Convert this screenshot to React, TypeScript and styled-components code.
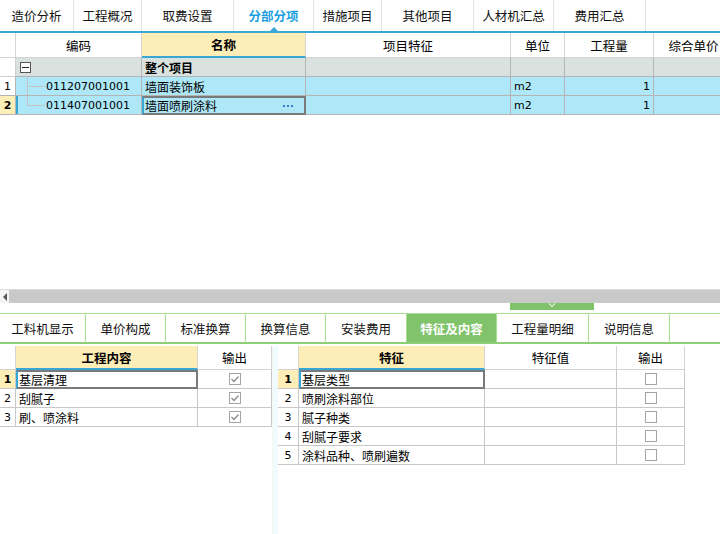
import React from 'react';
import styled, { createGlobalStyle } from 'styled-components';

const GlobalStyle = createGlobalStyle`
  html, body {
    margin: 0;
    padding: 0;
    background: #fff;
  }
  body {
    font-family: "Noto Sans CJK SC", "DejaVu Sans", sans-serif;
    font-size: 12px;
    color: #000;
  }
  * {
    box-sizing: border-box;
  }
`;

const Page = styled.div`
  width: 720px;
  height: 534px;
  overflow: hidden;
  display: flex;
  flex-direction: column;
  background: #fff;
`;

/* ---------- top tabs ---------- */

const TopTabs = styled.div`
  display: flex;
  height: 33px;
  border-bottom: 2px solid #3aa9da;
`;

const TopTab = styled.div<{ $w: number; $active?: boolean }>`
  position: relative;
  width: ${p => p.$w}px;
  display: flex;
  align-items: center;
  justify-content: center;
  border-right: 1px solid #e3e3e3;
  font-size: 12.5px;
  color: ${p => (p.$active ? '#1a9ee0' : '#111')};
  font-weight: ${p => (p.$active ? 700 : 400)};
  ${p =>
    p.$active &&
    `
    &::after {
      content: '';
      position: absolute;
      bottom: 0;
      left: 50%;
      margin-left: -4px;
      border-left: 4px solid transparent;
      border-right: 4px solid transparent;
      border-bottom: 4px solid #3aa9da;
    }
  `}
`;

/* ---------- grids ---------- */

const Grid = styled.div<{ $cols: string; $width?: number }>`
  display: grid;
  grid-template-columns: ${p => p.$cols};
  width: ${p => (p.$width ? `${p.$width}px` : 'auto')};
  flex-shrink: 0;
`;

const HeadCell = styled.div<{ $sort?: boolean; $h: number }>`
  height: ${p => p.$h}px;
  display: flex;
  align-items: center;
  justify-content: center;
  border-right: 1px solid #d4d4d4;
  border-bottom: ${p => (p.$sort ? '2px solid #39a7d6' : '1px solid #d4d4d4')};
  background: ${p => (p.$sort ? '#fdedb6' : '#fff')};
  font-weight: ${p => (p.$sort ? 700 : 400)};
  font-size: 12.5px;
  white-space: nowrap;
  overflow: hidden;
`;

type CellProps = {
  $bg?: string;
  $align?: 'left' | 'right' | 'center';
  $bold?: boolean;
  $selected?: boolean;
  $mark?: boolean;
  $line?: string;
};

const Cell = styled.div<CellProps>`
  position: relative;
  height: 19px;
  display: flex;
  align-items: center;
  justify-content: ${p =>
    p.$align === 'right' ? 'flex-end' : p.$align === 'center' ? 'center' : 'flex-start'};
  padding: 0 3px;
  background: ${p => p.$bg || '#fff'};
  border-right: 1px solid ${p => p.$line || '#b4b4b4'};
  border-bottom: 1px solid ${p => p.$line || '#b4b4b4'};
  font-weight: ${p => (p.$bold ? 700 : 400)};
  white-space: nowrap;
  overflow: hidden;
  ${p => p.$mark && `box-shadow: inset 2px 0 0 #39a7d6;`}
  ${p =>
    p.$selected &&
    `
    border: 2px solid #7a7a7a;
    border-left-color: #39a7d6;
    padding-left: 1px;
  `}
`;

const RowNum = styled(Cell)<{ $current?: boolean }>`
  justify-content: center;
  padding: 0;
  font-family: "DejaVu Sans", sans-serif;
  font-size: 11px;
  background: ${p => (p.$current ? '#fdedb6' : p.$bg || '#fff')};
  font-weight: ${p => (p.$current ? 700 : 400)};
`;

const Dots = styled.span`
  margin-left: auto;
  margin-right: 8px;
  display: flex;
  gap: 2px;
  & > i {
    width: 2px;
    height: 2px;
    background: #2f7fd4;
  }
`;

const MinusBox = styled.span`
  width: 11px;
  height: 11px;
  border: 1px solid #555;
  background: #fff;
  display: flex;
  align-items: center;
  justify-content: center;
  margin-left: 1px;
  &::before {
    content: '';
    width: 7px;
    height: 1px;
    background: #222;
  }
`;

const TreeLine = styled.span<{ $cont?: boolean }>`
  position: relative;
  align-self: stretch;
  width: 18px;
  margin: 0 1px 0 8px;
  &::before {
    content: '';
    position: absolute;
    left: 0;
    top: -1px;
    height: ${p => (p.$cont ? '21px' : '10px')};
    border-left: 1px solid #c4c4c4;
  }
  &::after {
    content: '';
    position: absolute;
    left: 0;
    right: 0;
    top: 9px;
    border-top: 1px solid #c4c4c4;
  }
`;

const Code = styled.span`
  font-family: "DejaVu Sans", sans-serif;
  font-size: 11px;
`;

/* ---------- middle ---------- */

const Blank = styled.div`
  flex: 1;
`;

const HScroll = styled.div`
  height: 14px;
  display: flex;
  background: #c9c9c9;
  border-top: 1px solid #dcdcdc;
`;

const ScrollArrow = styled.div`
  width: 9px;
  background: #f4f4f4;
  display: flex;
  align-items: center;
  justify-content: center;
  &::before {
    content: '';
    border-top: 4px solid transparent;
    border-bottom: 4px solid transparent;
    border-right: 4px solid #555;
  }
`;

const SplitBar = styled.div`
  height: 10px;
  display: flex;
  padding-left: 510px;
`;

const SplitHandle = styled.div`
  width: 84px;
  height: 7px;
  background: #80c36a;
  display: flex;
  justify-content: center;
  align-items: flex-start;
`;

/* ---------- lower tabs ---------- */

const LowerTabs = styled.div`
  display: flex;
  height: 31px;
  border-top: 1px solid #a8df92;
  border-bottom: 2px solid #8ccf77;
`;

const LowerTab = styled.div<{ $w: number; $active?: boolean }>`
  width: ${p => p.$w}px;
  display: flex;
  align-items: center;
  justify-content: center;
  border-right: 1px solid #a8df92;
  font-size: 12.5px;
  background: ${p => (p.$active ? '#80c36a' : '#fff')};
  color: ${p => (p.$active ? '#fff' : '#111')};
  font-weight: ${p => (p.$active ? 700 : 400)};
`;

const Lower = styled.div`
  display: flex;
  align-items: flex-start;
  height: 190px;
  padding-top: 2px;
`;

const Divider = styled.div`
  width: 6px;
  align-self: stretch;
  background: #effbfd;
  border-left: 1px solid #f6f6f6;
`;

const Check = styled.span`
  width: 12px;
  height: 12px;
  border: 1px solid #a4a4a4;
  background: #fff;
  display: flex;
  align-items: center;
  justify-content: center;
`;

function CheckBox({ checked }: { checked?: boolean }) {
  return (
    <Check>
      {checked && (
        <svg width="10" height="10" viewBox="0 0 10 10">
          <path d="M1.5 5 L4 7.5 L8.5 2.5" fill="none" stroke="#8a8a8a" strokeWidth="1.3" />
        </svg>
      )}
    </Check>
  );
}

const topTabs: [string, number][] = [
  ['造价分析', 74],
  ['工程概况', 68],
  ['取费设置', 92],
  ['分部分项', 80],
  ['措施项目', 68],
  ['其他项目', 92],
  ['人材机汇总', 80],
  ['费用汇总', 92],
];

const lowerTabs: [string, number][] = [
  ['工料机显示', 86],
  ['单价构成', 80],
  ['标准换算', 80],
  ['换算信息', 80],
  ['安装费用', 81],
  ['特征及内容', 90],
  ['工程量明细', 92],
  ['说明信息', 81],
];

const BLUE = '#aee8f8';
const GRAY = '#dae2df';

const contents = ['基层清理', '刮腻子', '刷、喷涂料'];
const features = ['基层类型', '喷刷涂料部位', '腻子种类', '刮腻子要求', '涂料品种、喷刷遍数'];

export default function App() {
  return (
    <Page>
      <GlobalStyle />
      <TopTabs>
        {topTabs.map(([t, w]) => (
          <TopTab key={t} $w={w} $active={t === '分部分项'}>
            {t}
          </TopTab>
        ))}
      </TopTabs>

      <Grid $cols="16px 126px 164px 205px 54px 89px 80px" $width={734}>
        <HeadCell $h={25} />
        <HeadCell $h={25}>编码</HeadCell>
        <HeadCell $h={25} $sort>名称</HeadCell>
        <HeadCell $h={25}>项目特征</HeadCell>
        <HeadCell $h={25}>单位</HeadCell>
        <HeadCell $h={25}>工程量</HeadCell>
        <HeadCell $h={25}>综合单价</HeadCell>

        <RowNum $line="#cfcfcf" />
        <Cell $bg={GRAY}>
          <MinusBox />
        </Cell>
        <Cell $bg={GRAY} $bold>整个项目</Cell>
        <Cell $bg={GRAY} />
        <Cell $bg={GRAY} />
        <Cell $bg={GRAY} />
        <Cell $bg={GRAY} />

        <RowNum>1</RowNum>
        <Cell $bg={BLUE}>
          <TreeLine $cont />
          <Code>011207001001</Code>
        </Cell>
        <Cell $bg={BLUE}>墙面装饰板</Cell>
        <Cell $bg={BLUE} />
        <Cell $bg={BLUE}>
          <Code>m2</Code>
        </Cell>
        <Cell $bg={BLUE} $align="right">
          <Code>1</Code>
        </Cell>
        <Cell $bg={BLUE} />

        <RowNum $current>2</RowNum>
        <Cell $bg={BLUE} $mark>
          <TreeLine />
          <Code>011407001001</Code>
        </Cell>
        <Cell $bg={BLUE} $selected>
          墙面喷刷涂料
          <Dots>
            <i />
            <i />
            <i />
          </Dots>
        </Cell>
        <Cell $bg={BLUE} />
        <Cell $bg={BLUE}>
          <Code>m2</Code>
        </Cell>
        <Cell $bg={BLUE} $align="right">
          <Code>1</Code>
        </Cell>
        <Cell $bg={BLUE} />
      </Grid>

      <Blank />

      <HScroll>
        <ScrollArrow />
      </HScroll>
      <SplitBar>
        <SplitHandle>
          <svg width="8" height="5" viewBox="0 0 8 5">
            <path d="M1 0.5 L4 3.5 L7 0.5" fill="none" stroke="#d8f0cf" strokeWidth="1.2" />
          </svg>
        </SplitHandle>
      </SplitBar>

      <LowerTabs>
        {lowerTabs.map(([t, w]) => (
          <LowerTab key={t} $w={w} $active={t === '特征及内容'}>
            {t}
          </LowerTab>
        ))}
      </LowerTabs>

      <Lower>
        <Grid $cols="16px 182px 74px" $width={272}>
          <HeadCell $h={24} />
          <HeadCell $h={24} $sort>工程内容</HeadCell>
          <HeadCell $h={24}>输出</HeadCell>
          {contents.map((c, i) => (
            <React.Fragment key={c}>
              <RowNum $current={i === 0} $line="#c8c8c8">{i + 1}</RowNum>
              <Cell $selected={i === 0} $line="#c8c8c8">{c}</Cell>
              <Cell $align="center" $line="#c8c8c8">
                <CheckBox checked />
              </Cell>
            </React.Fragment>
          ))}
        </Grid>
        <Divider />
        <Grid $cols="21px 186px 132px 68px" $width={407}>
          <HeadCell $h={24} />
          <HeadCell $h={24} $sort>特征</HeadCell>
          <HeadCell $h={24}>特征值</HeadCell>
          <HeadCell $h={24}>输出</HeadCell>
          {features.map((f, i) => (
            <React.Fragment key={f}>
              <RowNum $current={i === 0} $line="#c8c8c8">{i + 1}</RowNum>
              <Cell $selected={i === 0} $line="#c8c8c8">{f}</Cell>
              <Cell $line="#c8c8c8" />
              <Cell $align="center" $line="#c8c8c8">
                <CheckBox />
              </Cell>
            </React.Fragment>
          ))}
        </Grid>
      </Lower>
    </Page>
  );
}
